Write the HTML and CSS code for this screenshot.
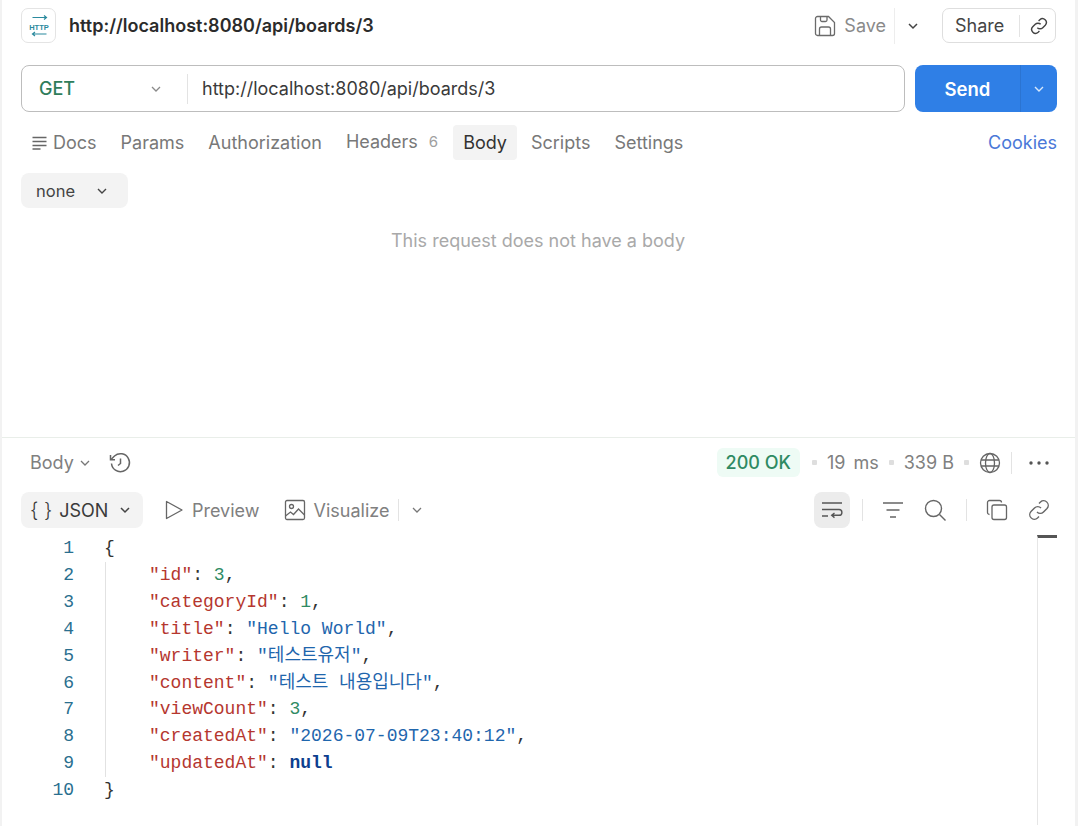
FILE: index.html
```html
<!DOCTYPE html>
<html lang="en">
<head>
    <meta charset="UTF-8">
    <title>http://localhost:8080/api/boards/3</title>
    <link rel="stylesheet" href="styles.css">
</head>
<body>
    <div class="app">
        <div class="request-pane">
            <div class="title-row">
                <div class="http-icon">
                    <svg width="24" height="24" viewBox="0 0 24 24" fill="none" stroke="#2b8a9e" stroke-width="1.200">
                        <path d="M5.500 3.500h14M17 1.500l2.500 2-2.500 2"/>
                        <path d="M19.500 20h-14M8 18l-2.500 2 2.500 2"/>
                        <text x="12" y="15.500" text-anchor="middle" class="http-text">HTTP</text>
                    </svg>
                </div>
                <div class="title">http://localhost:8080/api/boards/3</div>
                <div class="title-actions">
                    <svg class="icon" width="22" height="22" viewBox="0 0 22 22" fill="none" stroke="#6b6b6b" stroke-width="1.300">
                        <path d="M1.500 3.500a2 2 0 0 1 2-2h11l6 6v11a2 2 0 0 1-2 2h-15a2 2 0 0 1-2-2z"/>
                        <path d="M6.500 1.500V5a1.500 1.500 0 0 0 1.500 1.500h3.500A1.500 1.500 0 0 0 13 5V1.500M5.500 20.500V14a2 2 0 0 1 2-2h7a2 2 0 0 1 2 2v6.500"/>
                    </svg>
                    <span class="save-label">Save</span>
                    <span class="vline tall"></span>
                    <svg class="chev" width="12" height="12" viewBox="0 0 12 12" fill="none" stroke="#444" stroke-width="1.500"><path d="M2 4l4 4 4-4"/></svg>
                    <div class="share-box">
                        <span>Share</span>
                        <span class="vline"></span>
                        <svg width="20" height="20" viewBox="0 0 24 24" fill="none" stroke="#444" stroke-width="1.700">
                            <path d="M10 14a4.500 4.500 0 0 0 6.500 0l3-3a4.600 4.600 0 0 0-6.500-6.500l-1.500 1.500"/>
                            <path d="M14 10a4.500 4.500 0 0 0-6.500 0l-3 3a4.600 4.600 0 0 0 6.500 6.500l1.500-1.500"/>
                        </svg>
                    </div>
                </div>
            </div>

            <div class="url-row">
                <div class="url-box">
                    <div class="method">
                        <span>GET</span>
                        <svg width="12" height="12" viewBox="0 0 12 12" fill="none" stroke="#8a8a8a" stroke-width="1.300"><path d="M2 4l4 4 4-4"/></svg>
                    </div>
                    <div class="url-text">http://localhost:8080/api/boards/3</div>
                </div>
                <div class="send-btn">
                    <span class="send-label">Send</span>
                    <span class="send-arrow">
                        <svg width="12" height="12" viewBox="0 0 12 12" fill="none" stroke="#d8e8fb" stroke-width="1.400"><path d="M2 4l4 4 4-4"/></svg>
                    </span>
                </div>
            </div>

            <div class="tabs">
                <div class="tab docs-tab">
                    <svg width="18" height="18" viewBox="0 0 18 18" fill="none" stroke="#666" stroke-width="1.300"><path d="M1.500 3.500h14M1.500 7.500h14M1.500 11.500h14M1.500 15h8"/></svg>
                    <span>Docs</span>
                </div>
                <div class="tab">Params</div>
                <div class="tab">Authorization</div>
                <div class="tab headers-tab">Headers <span class="count">6</span></div>
                <div class="tab active">Body</div>
                <div class="tab">Scripts</div>
                <div class="tab">Settings</div>
                <div class="cookies">Cookies</div>
            </div>

            <div class="body-type">
                <span>none</span>
                <svg width="12" height="12" viewBox="0 0 12 12" fill="none" stroke="#444" stroke-width="1.400"><path d="M2 4l4 4 4-4"/></svg>
            </div>

            <div class="empty-note">This request does not have a body</div>
        </div>

        <div class="response-pane">
            <div class="res-status-row">
                <span class="res-body">Body</span>
                <svg width="12" height="12" viewBox="0 0 12 12" fill="none" stroke="#777" stroke-width="1.300"><path d="M2 4l4 4 4-4"/></svg>
                <svg class="history" width="24" height="24" viewBox="0 0 24 24" fill="none" stroke="#666" stroke-width="1.500">
                    <path d="M3.500 12.500A9 9 0 1 0 6.500 5L3 8.500"/>
                    <path d="M2.500 4V8.800H7M12.500 7.500v5l-2.500 2"/>
                </svg>
                <div class="res-meta">
                    <span class="status">200 OK</span>
                    <span class="dot"></span>
                    <span class="time">19 ms</span>
                    <span class="dot"></span>
                    <span>339 B</span>
                    <span class="dot"></span>
                    <svg class="globe" width="22" height="22" viewBox="0 0 22 22" fill="none" stroke="#666" stroke-width="1.300">
                        <circle cx="11" cy="11" r="9.500"/>
                        <ellipse cx="11" cy="11" rx="4.500" ry="9.500"/>
                        <path d="M2 8h18M2 14h18"/>
                    </svg>
                    <span class="vline"></span>
                    <svg class="more" width="22" height="6" viewBox="0 0 22 6" fill="#555"><circle cx="3" cy="3" r="1.700"/><circle cx="11" cy="3" r="1.700"/><circle cx="19" cy="3" r="1.700"/></svg>
                </div>
            </div>

            <div class="res-tool-row">
                <div class="format-pill">
                    <span class="braces">{ }</span>
                    <span>JSON</span>
                    <svg class="json-chev" width="12" height="12" viewBox="0 0 12 12" fill="none" stroke="#444" stroke-width="1.500"><path d="M2 4l4 4 4-4"/></svg>
                </div>
                <div class="view-btn">
                    <svg width="20" height="22" viewBox="0 0 20 22" fill="none" stroke="#666" stroke-width="1.300"><path d="M2.500 2.500v17L18 11z" stroke-linejoin="round"/></svg>
                    <span>Preview</span>
                </div>
                <div class="view-btn">
                    <svg width="22" height="22" viewBox="0 0 22 22" fill="none" stroke="#666" stroke-width="1.300">
                        <rect x="1.500" y="1.500" width="19" height="19" rx="1.500"/>
                        <circle cx="7.500" cy="7.500" r="2"/>
                        <path d="M1.500 17l5-4 3 2.500 5-5.500 6 6"/>
                    </svg>
                    <span>Visualize</span>
                </div>
                <span class="vline"></span>
                <svg class="view-chev" width="12" height="12" viewBox="0 0 12 12" fill="none" stroke="#777" stroke-width="1.300"><path d="M2 4l4 4 4-4"/></svg>
                <div class="res-tools">
                    <div class="wrap-btn">
                        <svg width="24" height="24" viewBox="0 0 24 24" fill="none" stroke="#555" stroke-width="1.400">
                            <path d="M2 5h20M2 11.500h17a2.800 2.800 0 0 1 0 5.800h-7M14.500 15l-2.800 2.300 2.800 2.300M2 18h6"/>
                        </svg>
                    </div>
                    <span class="vline"></span>
                    <svg width="22" height="22" viewBox="0 0 22 22" fill="none" stroke="#666" stroke-width="1.300"><path d="M1 4h20M4.500 11h13M8 18h6"/></svg>
                    <svg width="24" height="24" viewBox="0 0 24 24" fill="none" stroke="#666" stroke-width="1.400"><circle cx="10.500" cy="10.500" r="8"/><path d="M16.500 16.500l6 6"/></svg>
                    <span class="vline"></span>
                    <svg width="22" height="22" viewBox="0 0 22 22" fill="none" stroke="#666" stroke-width="1.300">
                        <rect x="6" y="6" width="14.500" height="14.500" rx="2"/>
                        <path d="M3.500 15.500A2 2 0 0 1 1.500 13.500V3.500a2 2 0 0 1 2-2h10a2 2 0 0 1 2 2"/>
                    </svg>
                    <svg width="24" height="24" viewBox="0 0 24 24" fill="none" stroke="#666" stroke-width="1.400">
                        <path d="M10 14a4.500 4.500 0 0 0 6.500 0l3.500-3.500a4.600 4.600 0 0 0-6.500-6.500l-1.500 1.500"/>
                        <path d="M14 10a4.500 4.500 0 0 0-6.500 0l-3.500 3.500a4.600 4.600 0 0 0 6.500 6.500l1.500-1.500"/>
                    </svg>
                </div>
            </div>

            <div class="code-area">
                <div class="gutter">
                    <div>1</div><div>2</div><div>3</div><div>4</div><div>5</div>
                    <div>6</div><div>7</div><div>8</div><div>9</div><div>10</div>
                </div>
                <div class="code">
                    <div class="line">{</div>
                    <div class="indented">
                        <div class="line"><span class="k">"id"</span>: <span class="n">3</span>,</div>
                        <div class="line"><span class="k">"categoryId"</span>: <span class="n">1</span>,</div>
                        <div class="line"><span class="k">"title"</span>: <span class="s">"Hello World"</span>,</div>
                        <div class="line"><span class="k">"writer"</span>: <span class="s">"테스트유저"</span>,</div>
                        <div class="line"><span class="k">"content"</span>: <span class="s">"테스트 내용입니다"</span>,</div>
                        <div class="line"><span class="k">"viewCount"</span>: <span class="n">3</span>,</div>
                        <div class="line"><span class="k">"createdAt"</span>: <span class="s">"2026-07-09T23:40:12"</span>,</div>
                        <div class="line"><span class="k">"updatedAt"</span>: <span class="nl">null</span></div>
                    </div>
                    <div class="line">}</div>
                </div>
                <div class="minimap"></div>
            </div>
        </div>
    </div>
</body>
</html>
```

FILE: styles.css
```css
* {
    box-sizing: border-box;
}

body {
    margin: 0;
    font-family: Inter, "Noto Sans", sans-serif;
    font-size: 18px;
    color: #6b6b6b;
    background: #fff;
    overflow: hidden;
}

svg {
    flex-shrink: 0;
}

.app {
    width: 1078px;
    height: 826px;
    border-left: 2px solid #f2f2f2;
    border-right: 3px solid #f2f2f2;
}

.vline {
    display: inline-block;
    width: 1px;
    height: 22px;
    background: #e3e3e3;
}

.vline.tall {
    height: 36px;
    background: #ededed;
}

/* request side */
.request-pane {
    height: 438px;
    padding: 8px 18px 0 19px;
    border-bottom: 1px solid #e9eee9;
}

.title-row {
    display: flex;
    align-items: center;
    height: 35px;
}

.http-icon {
    width: 35px;
    height: 35px;
    display: flex;
    align-items: center;
    justify-content: center;
    border: 1px solid #e4e4e4;
    border-radius: 7px;
    margin-right: 13px;
}

.http-text {
    font-family: "Liberation Sans", sans-serif;
    font-size: 7.5px;
    font-weight: bold;
    fill: #2b8a9e;
    stroke: none;
}

.title {
    font-weight: 600;
    color: #2b2b2b;
}

.title-actions {
    margin-left: auto;
    margin-right: 1px;
    display: flex;
    align-items: center;
}

.save-label {
    margin-left: 8px;
    margin-right: 8px;
    color: #8a8a8a;
}

.chev {
    margin: 0 23px 0 12px;
}

.share-box {
    width: 114px;
    height: 35px;
    display: flex;
    align-items: center;
    padding-left: 12px;
    border: 1px solid #dedede;
    border-radius: 7px;
    color: #444;
}

.share-box .vline {
    margin: 0 9px 0 15px;
}

.url-row {
    display: flex;
    margin-top: 22px;
    gap: 10px;
}

.url-box {
    width: 884px;
    height: 47px;
    display: flex;
    align-items: center;
    border: 1px solid #bdbdbd;
    border-radius: 8px;
}

.method {
    width: 166px;
    height: 30px;
    display: flex;
    align-items: center;
    justify-content: space-between;
    padding: 0 25px 0 17px;
    border-right: 1px solid #e3e3e3;
    color: #2f7d5b;
    font-weight: 500;
}

.url-text {
    margin-left: 14px;
    color: #3a3a3a;
}

.send-btn {
    width: 142px;
    height: 47px;
    display: flex;
    align-items: center;
    background: #2f7fe6;
    border-radius: 8px;
    color: #fff;
    font-weight: 600;
    font-size: 18.5px;
}

.send-label {
    width: 105px;
    text-align: center;
}

.send-arrow {
    flex: 1;
    height: 100%;
    display: flex;
    align-items: center;
    justify-content: center;
    border-left: 1px solid #2b74d2;
}

.tabs {
    display: flex;
    align-items: center;
    height: 35px;
    margin-top: 13px;
    gap: 4px;
}

.tab {
    height: 35px;
    display: flex;
    align-items: center;
    padding: 0 10px;
    border-radius: 4px;
    color: #787878;
}

.docs-tab {
    gap: 4px;
}

.headers-tab {
    padding-bottom: 3px;
    gap: 11px;
}

.count {
    font-size: 15px;
    color: #a0a0a0;
}

.tab.active {
    margin-left: 1px;
    background: #f3f3f3;
    color: #333;
}

.cookies {
    margin-left: auto;
    color: #4a78d8;
}

.body-type {
    width: 107px;
    height: 35px;
    display: flex;
    align-items: center;
    justify-content: space-between;
    margin-top: 13px;
    padding: 0 20px 0 15px;
    background: #f3f3f3;
    border-radius: 8px;
    color: #444;
    font-size: 16.5px;
}

.empty-note {
    margin-top: 22px;
    padding-right: 2px;
    text-align: center;
    color: #a9a9a9;
}

/* response side */
.response-pane {
    padding: 0 18px 0 19px;
}

.res-status-row {
    display: flex;
    align-items: center;
    height: 49px;
    padding-left: 9px;
    gap: 5px;
}

.res-body {
    color: #808080;
}

.history {
    margin-left: 12px;
}

.res-meta {
    margin-left: auto;
    display: flex;
    align-items: center;
    gap: 10px;
    color: #808080;
}

.status {
    margin-right: 2px;
    padding: 4px 9px;
    background: #eefbf5;
    border-radius: 6px;
    color: #2f8a63;
    font-weight: 500;
}

.time {
    word-spacing: 3px;
}

.dot {
    width: 5px;
    height: 5px;
    background: #dedede;
    border-radius: 1px;
}

.more {
    margin: 0 7px 0 6px;
}

.res-tool-row {
    display: flex;
    align-items: center;
    height: 36px;
    margin-top: 5px;
}

.format-pill {
    width: 122px;
    height: 36px;
    display: flex;
    align-items: center;
    gap: 7px;
    padding-left: 9px;
    background: #f3f3f3;
    border-radius: 8px;
    color: #3a3a3a;
}

.braces {
    font-size: 20px;
    font-weight: 300;
}

.json-chev {
    margin-left: 4px;
}

.view-btn {
    display: flex;
    align-items: center;
    gap: 8px;
    margin-left: 21px;
    color: #808080;
}

.view-btn + .view-btn {
    margin-left: 24px;
}

.res-tool-row > .vline {
    margin-left: 9px;
}

.view-chev {
    margin-left: 12px;
}

.res-tools {
    margin-left: auto;
    display: flex;
    align-items: center;
    gap: 19px;
    padding-right: 6px;
}

.wrap-btn {
    width: 36px;
    height: 36px;
    margin-right: -7px;
    display: flex;
    align-items: center;
    justify-content: center;
    background: #ececec;
    border-radius: 8px;
}

.code-area {
    display: flex;
    position: relative;
    margin-top: 7px;
    font-family: "Liberation Mono", "Noto Sans CJK KR", monospace;
    font-size: 18px;
    line-height: 26.9px;
}

.gutter {
    width: 53px;
    text-align: right;
    color: #2a6f8f;
}

.code {
    margin-left: 30px;
    color: #333;
}

.indented {
    margin-left: 1px;
    padding-left: 43px;
    border-left: 1px solid #e2e2e2;
}

.k {
    color: #b5372f;
}

.s {
    color: #1f66ad;
}

.n {
    color: #2f8a63;
}

.nl {
    color: #0d3f8f;
    font-weight: bold;
}

.minimap {
    position: absolute;
    right: 0;
    top: 0;
    width: 20px;
    height: 290px;
    border-left: 1px solid #e6e6e6;
    border-top: 3px solid #555;
}
```
